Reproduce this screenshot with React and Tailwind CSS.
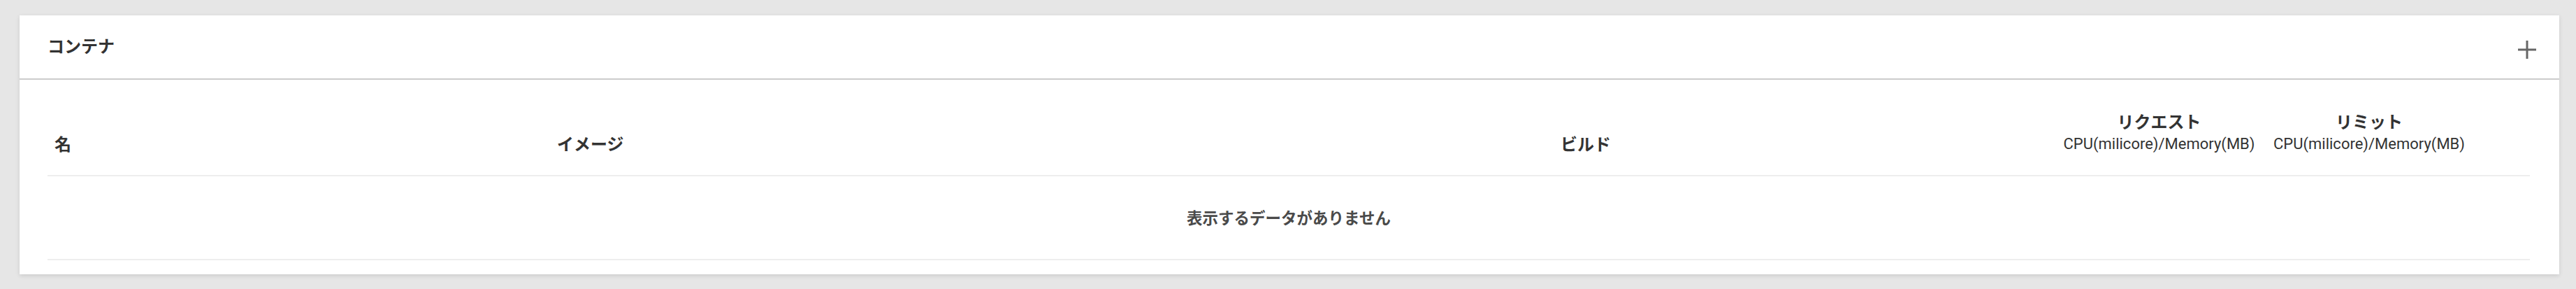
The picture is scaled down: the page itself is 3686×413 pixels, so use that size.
const jp = { fontFamily: '"Noto Sans CJK JP", "Noto Sans", sans-serif' };
const latin = { fontFamily: 'Roboto, "Noto Sans CJK JP", sans-serif' };

function ContainerCard() {
  return (
    <div className="bg-white shadow-[0_2px_6px_rgba(0,0,0,0.12)]">
      {/* Header */}
      <div className="h-[92px] flex items-center justify-between pl-[40px] pr-[31px] border-b-2 border-[#cccccc]">
        <h2 className="text-[24px] font-bold text-[#333333] -mt-[4px]" style={jp}>
          コンテナ
        </h2>
        <button className="text-[#666666] mt-[8px]">
          <svg width="30" height="30" viewBox="0 0 30 30">
            <path d="M15 2v26M2 15h26" stroke="currentColor" strokeWidth="3" />
          </svg>
        </button>
      </div>

      {/* Table */}
      <div className="pl-[40px] pr-[42px] pb-[20px]">
        <div
          className="grid grid-cols-[719px_1436px_716px_301px_300px_1fr] items-end h-[138px] pb-[33px] border-b-2 border-[#eeeeee] text-[#333333]"
          style={jp}
        >
          <div className="px-[10px] text-[24px] font-bold leading-none">名</div>
          <div className="px-[10px] text-[24px] font-bold leading-none">イメージ</div>
          <div className="px-[10px] text-[24px] font-bold leading-none">ビルド</div>
          <div className="text-center -mb-[2px]">
            <div className="text-[24px] font-bold leading-[24px] mb-[8px]">リクエスト</div>
            <div className="text-[22px] leading-[26px]" style={latin}>CPU(milicore)/Memory(MB)</div>
          </div>
          <div className="text-center -mb-[2px]">
            <div className="text-[24px] font-bold leading-[24px] mb-[8px]">リミット</div>
            <div className="text-[22px] leading-[26px]" style={latin}>CPU(milicore)/Memory(MB)</div>
          </div>
          <div></div>
        </div>
        <div className="h-[120px] flex items-center justify-center border-b-2 border-[#eeeeee]">
          <span className="text-[22.5px] font-bold text-[#4a4a4a]" style={jp}>
            表示するデータがありません
          </span>
        </div>
      </div>
    </div>
  );
}

export default function App() {
  return (
    <div className="w-[3686px] h-[413px] bg-[#e6e6e6] pt-[22px] pl-[28px] pr-[24px] overflow-hidden">
      <ContainerCard />
    </div>
  );
}
